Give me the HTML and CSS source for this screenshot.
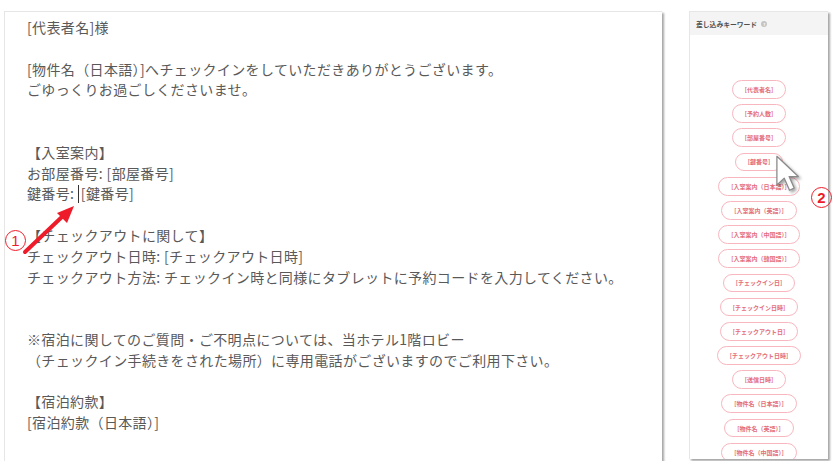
FILE: index.html
```html
<!DOCTYPE html>
<html lang="ja">
  <head>
    <meta charset="UTF-8" />
    <meta name="viewport" content="width=device-width, initial-scale=1.0" />
    <title>メッセージ編集</title>
    <link rel="stylesheet" href="styles.css">
  </head>
  <body>
    <main class="editor">
      <article class="message">
        <div class="message-text">[代表者名]様

[物件名（日本語）]へチェックインをしていただきありがとうございます。
ごゆっくりお過ごしくださいませ。


【入室案内】
お部屋番号: [部屋番号]
鍵番号: <span class="caret"></span>[鍵番号]

【チェックアウトに関して】
チェックアウト日時: [チェックアウト日時]
チェックアウト方法: チェックイン時と同様にタブレットに予約コードを入力してください。


※宿泊に関してのご質問・ご不明点については、当ホテル1階ロビー
（チェックイン手続きをされた場所）に専用電話がございますのでご利用下さい。

【宿泊約款】
[宿泊約款（日本語）]</div>
      </article>

      <aside class="keywords">
        <header class="keywords-head">
          <span>差し込みキーワード</span>
          <span class="help">?</span>
        </header>
        <ul class="keyword-list">
          <li class="pill">[代表者名]</li>
          <li class="pill">[予約人数]</li>
          <li class="pill">[部屋番号]</li>
          <li class="pill">[鍵番号]</li>
          <li class="pill">[入室案内（日本語）]</li>
          <li class="pill">[入室案内（英語）]</li>
          <li class="pill">[入室案内（中国語）]</li>
          <li class="pill">[入室案内（韓国語）]</li>
          <li class="pill">[チェックイン日]</li>
          <li class="pill">[チェックイン日時]</li>
          <li class="pill">[チェックアウト日]</li>
          <li class="pill">[チェックアウト日時]</li>
          <li class="pill">[送信日時]</li>
          <li class="pill">[物件名（日本語）]</li>
          <li class="pill">[物件名（英語）]</li>
          <li class="pill">[物件名（中国語）]</li>
        </ul>
      </aside>
    </main>

    <!-- annotations drawn over the screenshot -->
    <svg class="arrow" width="90" height="70" viewBox="0 0 90 70">
      <line x1="25" y1="52" x2="64" y2="15" stroke="#ee1c2a" stroke-width="4" stroke-linecap="round" />
      <polygon points="74,6 57,13 67,23" fill="#ee1c2a" />
    </svg>
    <span class="mark mark-one">1</span>
    <span class="mark mark-two">2</span>

    <svg class="pointer" width="40" height="46" viewBox="0 0 34 40">
      <path d="M3 2 L3 27 L9.4 21 L14 31.5 L18 29.6 L13.6 19.6 L21.6 19.6 Z"
            fill="#fff" stroke="#8a8a8a" stroke-width="1.1" stroke-linejoin="round" />
    </svg>
  </body>
</html>
```

FILE: styles.css
```css
body {
  margin: 0;
  background: #fff;
  font-family: "Noto Sans CJK JP", "Noto Sans", sans-serif;
  color: #555;
}
.editor {
  display: flex;
  align-items: flex-start;
  gap: 27px;
  padding: 11px 0 0 4px;
}
.message {
  width: 658px;
  height: 450px;
  box-sizing: border-box;
  background: #fff;
  border-top: 1px solid #e6e6e6;
  border-left: 1px solid #e6e6e6;
  box-shadow: 2px 2px 2px rgba(0, 0, 0, 0.35);
}
.message-text {
  white-space: pre-line;
  font-size: 14px;
  line-height: 20.8px;
  letter-spacing: 0.36px;
  padding: 5px 0 0 22px;
  color: #595959;
}
.caret {
  display: inline-block;
  width: 1px;
  height: 18px;
  margin-right: 2px;
  background: #333;
  vertical-align: -4px;
}
.keywords {
  width: 139px;
  height: 448px;
  box-sizing: border-box;
  background: #fff;
  border-top: 1px solid #e6e6e6;
  border-left: 1px solid #e6e6e6;
  box-shadow: 2px 2px 2px rgba(0, 0, 0, 0.35);
  overflow: hidden;
}
.keywords-head {
  display: flex;
  align-items: center;
  gap: 4px;
  height: 23px;
  padding-left: 6px;
  background: #f4f4f4;
  font-size: 6.8px;
  font-weight: bold;
  color: #505050;
}
.help {
  display: inline-flex;
  justify-content: center;
  align-items: center;
  width: 6px;
  height: 6px;
  border-radius: 50%;
  background: #c4c4c4;
  color: #fff;
  font-size: 4px;
}
.keyword-list {
  list-style: none;
  margin: 0;
  padding: 45px 0 0;
  display: flex;
  flex-direction: column;
  align-items: center;
  gap: 5.4px;
}
.pill {
  display: flex;
  align-items: center;
  height: 18.8px;
  box-sizing: border-box;
  padding: 0 12px;
  border: 1.4px solid #f8b6be;
  border-radius: 10px;
  font-size: 6px;
  font-weight: bold;
  color: #e46d7a;
  white-space: nowrap;
}
.arrow {
  position: absolute;
  left: 0;
  top: 200px;
}
.mark {
  position: absolute;
  display: flex;
  justify-content: center;
  align-items: center;
  box-sizing: border-box;
  width: 21px;
  height: 21px;
  border: 1.3px solid #ee1c2a;
  border-radius: 50%;
  color: #ee1c2a;
  font-family: "Liberation Sans", sans-serif;
  font-size: 15px;
}
.mark-one {
  left: 5px;
  top: 230px;
}
.mark-two {
  left: 811px;
  top: 187px;
  font-weight: bold;
}
.pointer {
  position: absolute;
  left: 773px;
  top: 154px;
  filter: drop-shadow(2px 2px 1.5px rgba(0, 0, 0, 0.35));
}
```
